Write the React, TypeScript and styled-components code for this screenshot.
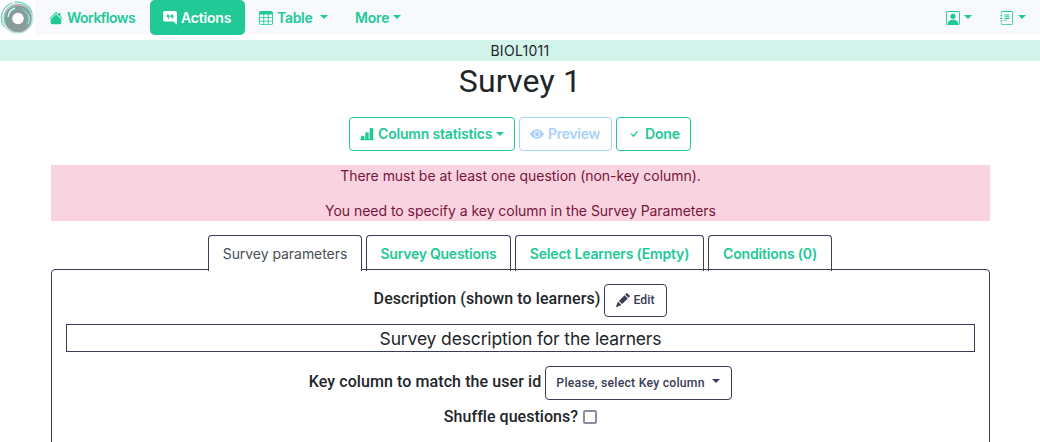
import React from 'react';
import styled, { createGlobalStyle } from 'styled-components';
import {
  BsHouseFill, BsChatRightQuoteFill, BsTable, BsPersonSquare, BsJournalText,
  BsBarChartLineFill, BsEyeFill, BsCheck, BsPencilFill,
} from 'react-icons/bs';

const green = '#21c997';
const ink = '#393c55';

const GlobalStyle = createGlobalStyle`
  * { box-sizing: border-box; }
  body {
    margin: 0;
    background: #fff;
    color: #212529;
    font: 400 14px/21px Inter, "Liberation Sans", sans-serif;
    overflow: hidden;
  }
  svg { display: block; flex: none; }
`;

const Page = styled.div`height: 442px; overflow: hidden;`;

const Navbar = styled.nav`
  display: flex;
  height: 35px;
  margin-bottom: 5px;
  padding-right: 5px;
  background: linear-gradient(to right, #fff 35px, #f8f9fc 35px);
`;

const LogoLink = styled.a`width: 35px; height: 35px;`;

const NavItem = styled.a<{ $w: number; $active?: boolean; $pad?: number }>`
  display: flex;
  align-items: center;
  width: ${p => p.$w}px;
  height: 35px;
  padding-left: ${p => p.$pad ?? 14}px;
  border-radius: ${p => (p.$active ? '5px' : '0')};
  background: ${p => (p.$active ? green : 'transparent')};
  color: ${p => (p.$active ? '#fff' : green)};
  font-weight: 600;
`;

const Spacer = styled.div`flex: 1;`;

const Label = styled.span<{ $ls?: number; $left?: number }>`
  margin-left: ${p => p.$left ?? 4}px;
  letter-spacing: ${p => p.$ls ?? -0.18}px;
  white-space: nowrap;
`;

const Caret = styled.span<{ $left?: number; $up?: number }>`
  margin: 0 0 ${p => p.$up ?? 2}px ${p => p.$left ?? 4}px;
  border: 4px solid transparent;
  border-top-color: currentColor;
  border-bottom: 0;
`;

const Course = styled.div`
  height: 21px;
  background: #d3f4ea;
  text-align: center;
  font-size: 14px;
  letter-spacing: 0.3px;
`;

const Title = styled.h1`
  margin: 0;
  height: 56px;
  text-align: center;
  font: 400 32px/40px Roboto, sans-serif;
  letter-spacing: 0.2px;
`;

const Toolbar = styled.div`
  display: flex;
  justify-content: center;
  gap: 4px;
  margin-bottom: 14px;
`;

const Button = styled.button<{ $w: number; $color: string; $pad?: number }>`
  display: flex;
  align-items: center;
  width: ${p => p.$w}px;
  height: 34px;
  padding: 0 0 1px ${p => p.$pad ?? 10}px;
  border: 1px solid ${p => p.$color};
  border-radius: 4px;
  background: #fff;
  color: ${p => p.$color};
  font: 600 14px/21px Inter, sans-serif;
`;

const SmallButton = styled(Button)<{ $h?: number }>`
  height: ${p => p.$h ?? 34}px;
  color: ${ink};
  font: 500 12.25px/18px Roboto, sans-serif;
`;

const Content = styled.main`margin: 0 50px 0 51px;`;

const Alert = styled.div`
  height: 56px;
  margin-bottom: 14px;
  background: #fad3e0;
  color: #76143a;
  text-align: center;
  letter-spacing: -0.04px;
  p { margin: 0 0 14px; }
`;

const Tabs = styled.div`
  display: flex;
  justify-content: center;
  gap: 4px;
  position: relative;
  z-index: 1;
  margin-bottom: -2px;
  padding-right: 1px;
`;

const Tab = styled.a<{ $w: number; $ls?: number; $active?: boolean }>`
  width: ${p => p.$w}px;
  height: 36px;
  padding-top: 7px;
  border: 1px solid ${ink};
  border-bottom: 0;
  border-radius: 4px 4px 0 0;
  background: ${p => (p.$active ? '#fff' : 'linear-gradient(#fff, #fff) 0 0 / 100% 33px no-repeat')};
  color: ${p => (p.$active ? '#495057' : green)};
  font-weight: ${p => (p.$active ? 400 : 600)};
  letter-spacing: ${p => p.$ls ?? -0.18}px;
  text-align: center;
  white-space: nowrap;
`;

const Panel = styled.section`
  height: 200px;
  padding: 14px 14px 0;
  border: 1px solid ${ink};
  border-radius: 4px;
`;

const Field = styled.div<{ $h: number; $mb: number }>`
  display: flex;
  justify-content: center;
  height: ${p => p.$h}px;
  margin-bottom: ${p => p.$mb}px;
  gap: 4px;
`;

const FieldLabel = styled.label<{ $ls: number; $top?: number }>`
  font: 500 16px/20px Roboto, sans-serif;
  letter-spacing: ${p => p.$ls}px;
  padding-top: ${p => p.$top ?? 5}px;
  white-space: nowrap;
`;

const Description = styled.div`
  height: 28px;
  margin-bottom: 14px;
  border: 1px solid ${ink};
  text-align: center;
  font-size: 17.5px;
  letter-spacing: -0.15px;
  line-height: 28px;
`;

const Checkbox = styled.input`
  appearance: none;
  width: 14px;
  height: 14px;
  margin: 10px 0 0 1px;
  border: 2px solid #8e8c9e;
  border-radius: 2px;
  background: #fff;
`;

const Logo = () => (
  <svg width="35" height="35" viewBox="0 0 35 35" fill="none">
    <circle cx="17.5" cy="17.5" r="15.5" stroke="#b9e6dd" strokeWidth="1.2" />
    <circle cx="17.8" cy="18" r="13.6" stroke="#b4bebe" strokeWidth="1.6" />
    <circle cx="18" cy="18.5" r="9.3" stroke="#8b9a9b" strokeWidth="8" />
    <path d="M4 27A16 16 0 0 1 12 3M15 2a16 16 0 0 1 17 11" stroke="#69d6c2" strokeWidth="1.1" />
    <path d="M8 23A11 11 0 0 1 17 8" stroke="#62aca0" strokeWidth="3" />
    <path d="M8 17Q9 10 15 8M28 24q3-8-3-13" stroke="#d8fff7" strokeWidth="1.4" />
    <path d="M22 8q9 6 5 17" stroke="#58cdb9" strokeWidth="1.4" />
    <circle cx="18" cy="18.5" r="5.7" fill="#fff" />
  </svg>
);

export default function App() {
  return (
    <Page>
      <GlobalStyle />
      <Navbar>
        <LogoLink><Logo /></LogoLink>
        <NavItem $w={115}><BsHouseFill size={14} /><Label $ls={-0.5}>Workflows</Label></NavItem>
        <NavItem $w={95} $active $pad={13}><BsChatRightQuoteFill size={14} /><Label>Actions</Label></NavItem>
        <NavItem $w={96}><BsTable size={14} /><Label $ls={-0.3}>Table</Label><Caret $left={8} /></NavItem>
        <NavItem $w={75}><Label $left={0}>More</Label><Caret /></NavItem>
        <Spacer />
        <NavItem $w={54}><BsPersonSquare size={14} /><Caret /></NavItem>
        <NavItem $w={49}><BsJournalText size={14} /><Caret /></NavItem>
      </Navbar>
      <Course>BIOL1011</Course>
      <Title>Survey 1</Title>
      <Toolbar>
        <Button $w={166} $color={green}><BsBarChartLineFill size={14} /><Label>Column statistics</Label><Caret $up={0} /></Button>
        <Button $w={93} $color="#a9d2fb"><BsEyeFill size={14} /><Label $ls={-0.3}>Preview</Label></Button>
        <Button $w={75} $color={green}><BsCheck size={14} /><Label>Done</Label></Button>
      </Toolbar>
      <Content>
        <Alert>
          <p>There must be at least one question (non-key column).</p>
          <p>You need to specify a key column in the Survey Parameters</p>
        </Alert>
        <Tabs>
          <Tab $w={154} $ls={-0.05} $active>Survey parameters</Tab>
          <Tab $w={145} $ls={-0.25}>Survey Questions</Tab>
          <Tab $w={189}>Select Learners (Empty)</Tab>
          <Tab $w={124}>Conditions (0)</Tab>
        </Tabs>
        <Panel>
          <Field $h={34} $mb={6}>
            <FieldLabel $ls={0.08}>Description (shown to learners)</FieldLabel>
            <SmallButton $w={63} $h={33} $color={ink} $pad={11}><BsPencilFill size={14} /><Label $left={3} $ls={0.1}>Edit</Label></SmallButton>
          </Field>
          <Description>Survey description for the learners</Description>
          <Field $h={34} $mb={0}>
            <FieldLabel $ls={0.09} $top={6}>Key column to match the user id</FieldLabel>
            <SmallButton $w={187} $color={ink}><Label $left={0} $ls={0.23}>Please, select Key column</Label><Caret $left={7} $up={3} /></SmallButton>
          </Field>
          <Field $h={34} $mb={0}>
            <FieldLabel $ls={0.04} $top={7}>Shuffle questions?</FieldLabel>
            <Checkbox type="checkbox" />
          </Field>
        </Panel>
      </Content>
    </Page>
  );
}
